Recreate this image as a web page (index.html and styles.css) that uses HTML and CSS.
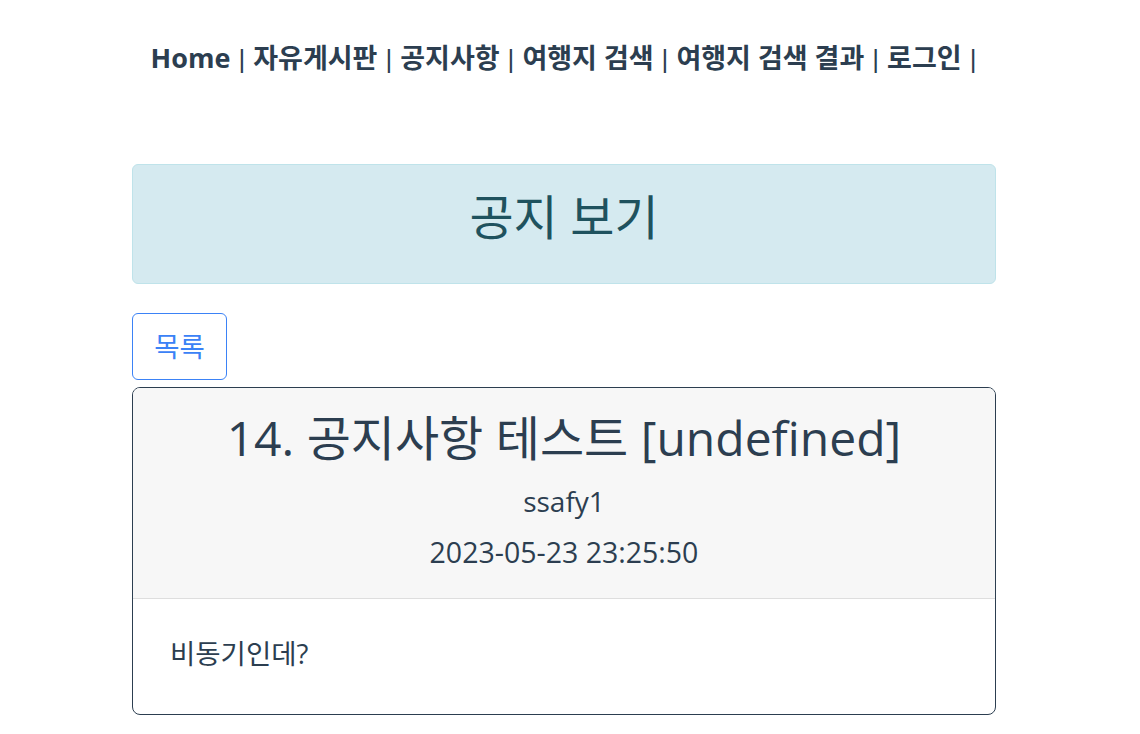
FILE: index.html
```html
<!DOCTYPE html>
<html lang="ko">
<head>
<meta charset="utf-8">
<title>공지 보기</title>
<link rel="stylesheet" href="styles.css">
</head>
<body>
<div class="app">
  <nav class="nav">
    <a href="#">Home</a> <span class="sep">|</span> <a href="#">자유게시판</a> <span class="sep">|</span> <a href="#">공지사항</a> <span class="sep">|</span> <a href="#">여행지 검색</a> <span class="sep">|</span> <a href="#">여행지 검색 결과</a> <span class="sep">|</span> <a href="#">로그인</a> <span class="sep">|</span>
  </nav>
  <main class="container">
    <div class="alert">공지 보기</div>
    <div class="actions"><button class="btn">목록</button></div>
    <div class="card">
      <div class="card-header">
        <h2 class="title">14. 공지사항 테스트 [undefined]</h2>
        <div class="author">ssafy1</div>
        <div class="date">2023-05-23 23:25:50</div>
      </div>
      <div class="card-body">비동기인데?</div>
    </div>
  </main>
</div>
</body>
</html>
```
FILE: styles.css
```css
* { box-sizing: border-box; }
body {
  margin: 0;
  font-family: "Open Sans", "Noto Sans CJK KR", sans-serif;
  color: #2c3e50;
  background: #fff;
}
.app {
  width: 1128px;
  text-align: center;
}
.nav {
  padding-top: 38px;
  height: 164px;
  font-size: 27px;
  line-height: 40px;
  color: #2c3e50;
}
.nav a {
  font-weight: bold;
  color: #2c3e50;
  text-decoration: none;
}
.sep {
  font-family: "Liberation Sans", sans-serif;
  font-weight: normal;
  font-size: 26px;
  margin: 0 1px;
  color: #2c3e50;
}
.container {
  width: 864px;
  margin: 0 auto;
}
.alert {
  height: 120px;
  background: #d5eaf0;
  border: 1px solid #bfe3ea;
  border-radius: 6px;
  color: #1f525e;
  font-size: 48px;
  display: flex;
  align-items: center;
  justify-content: center;
  padding-bottom: 20px;
}
.actions {
  display: flex;
  margin-top: 29px;
}
.btn {
  width: 95px;
  height: 67px;
  border: 1px solid #3b82f6;
  border-radius: 6px;
  background: #fff;
  color: #3b82f6;
  font-family: inherit;
  font-size: 27.5px;
  padding: 0 0 4px;
}
.card {
  margin-top: 7px;
  border: 1px solid #2c3e50;
  border-radius: 8px;
  overflow: hidden;
  text-align: center;
}
.card-header {
  background: #f7f7f7;
  border-bottom: 1px solid #dedede;
  height: 211px;
  padding-top: 14px;
}
.title {
  margin: 0;
  font-weight: normal;
  font-size: 48px;
  line-height: 72px;
}
.author {
  font-size: 28px;
  line-height: 40px;
  margin-top: 7px;
}
.date {
  font-size: 28.5px;
  line-height: 40px;
  margin-top: 11px;
}
.card-body {
  text-align: left;
  padding: 33px 37px 38px;
  font-size: 27.5px;
  line-height: 44px;
}
```
